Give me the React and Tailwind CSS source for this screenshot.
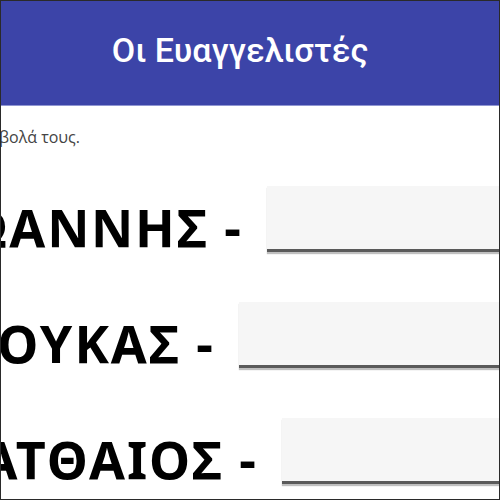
const rows = [
  { label: 'ΙΩΑΝΝΗΣ -', clip: 'w-[242px]', pad: 'pt-[39px]' },
  { label: 'ΛΟΥΚΑΣ -', clip: 'w-[214px]', pad: 'pt-[50px]' },
  { label: 'ΜΑΤΘΑΙΟΣ -', clip: 'w-[257px]', pad: 'pt-[50px]' },
]

function AnswerRow({ label, clip, pad }) {
  return (
    <div className={`flex items-end ${pad}`}>
      <div className={`${clip} flex shrink-0 justify-end overflow-hidden whitespace-nowrap`}>
        <span className="font-['Noto_Sans',sans-serif] text-[52px] leading-[50px] font-bold tracking-[2px] text-black">
          {label}
        </span>
      </div>
      <div className="ml-[24px] h-[66px] flex-1 border-b-[3px] border-[#5a5a5a] bg-[#f6f6f6] shadow-[0_2px_1px_rgba(0,0,0,0.25)]" />
    </div>
  )
}

export default function App() {
  return (
    <div className="h-[500px] w-[500px] overflow-hidden border border-[#2a2a2a] bg-white">
      <header className="flex h-[105px] items-center justify-center border-b border-[#9096d2] bg-[#3c44a8] pr-[20px] pb-[6px]">
        <h1 className="font-['Roboto',sans-serif] text-[34px] font-medium text-white">Οι Ευαγγελιστές</h1>
      </header>
      <div className="mt-[21px] flex w-[79px] justify-end overflow-hidden whitespace-nowrap">
        <span className="font-['Open_Sans',sans-serif] text-[16px] leading-[20px] text-[#444]">
          με το σύμβολά τους.
        </span>
      </div>
      {rows.map((r) => (
        <AnswerRow key={r.label} {...r} />
      ))}
    </div>
  )
}
